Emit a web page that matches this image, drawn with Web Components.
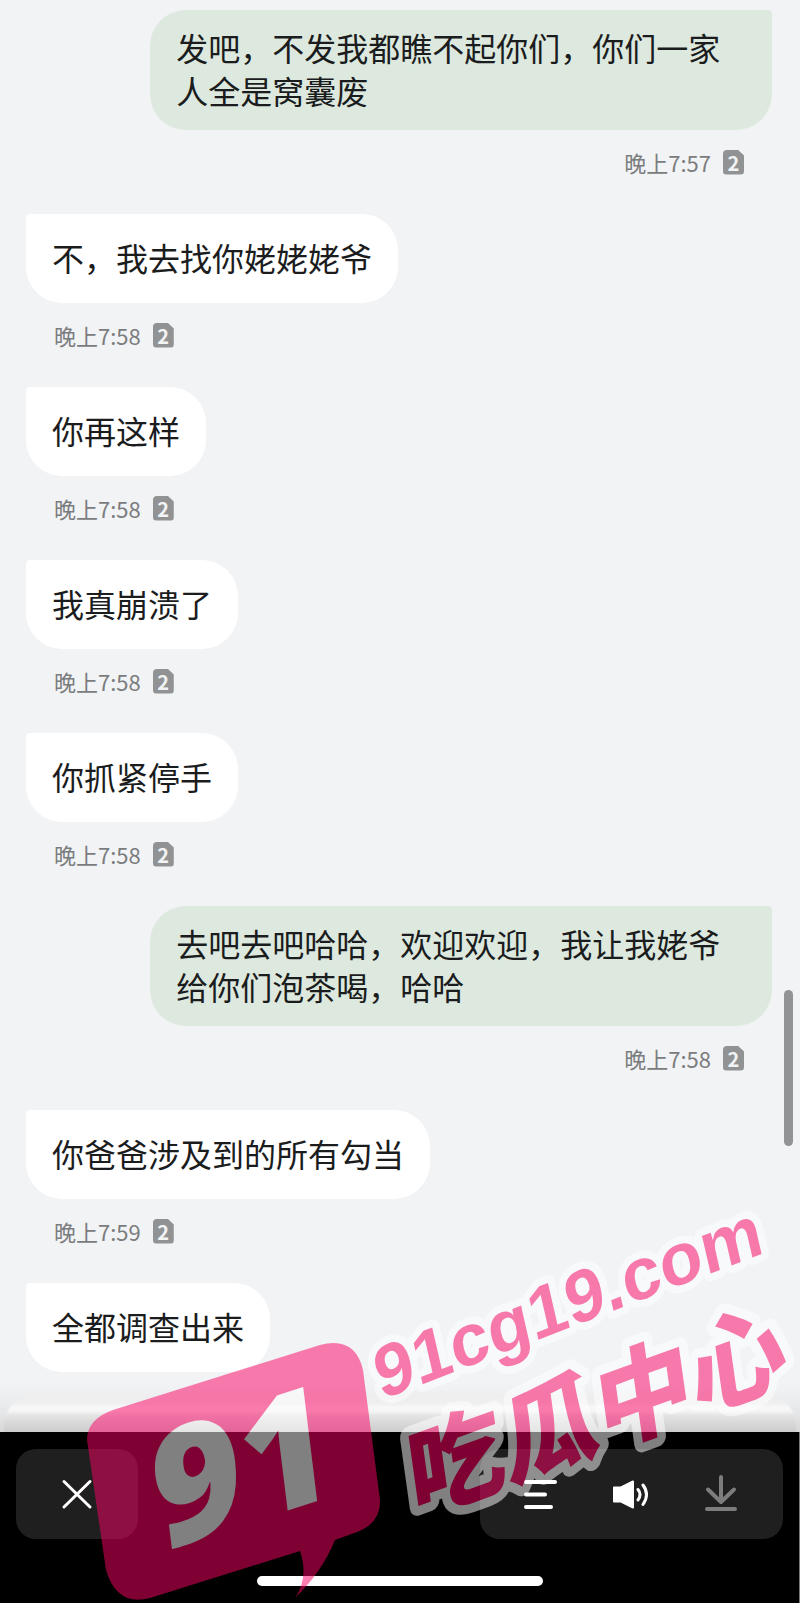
<!DOCTYPE html>
<html lang="zh-CN">
<head>
<meta charset="utf-8">
<meta name="viewport" content="width=device-width, initial-scale=1">
<title>信息</title>
<style>
  html, body { height: 100%; }
  body {
    margin: 0;
    background: #000;
    font-family: "Noto Sans CJK SC", "Noto Sans", sans-serif;
  }
</style>
</head>
<body>
<chat-viewer>
  <chat-message side="out" time="晚上7:57">发吧，不发我都瞧不起你们，你们一家人全是窝囊废</chat-message>
  <chat-message time="晚上7:58">不，我去找你姥姥姥爷</chat-message>
  <chat-message time="晚上7:58">你再这样</chat-message>
  <chat-message time="晚上7:58">我真崩溃了</chat-message>
  <chat-message time="晚上7:58">你抓紧停手</chat-message>
  <chat-message side="out" time="晚上7:58">去吧去吧哈哈，欢迎欢迎，我让我姥爷给你们泡茶喝，哈哈</chat-message>
  <chat-message time="晚上7:59">你爸爸涉及到的所有勾当</chat-message>
  <chat-message>全都调查出来</chat-message>
  <viewer-bar slot="bar"></viewer-bar>
  <site-watermark slot="overlay"></site-watermark>
</chat-viewer>

<script>
'use strict';

class SimBadge extends HTMLElement {
  constructor() {
    super();
    this.attachShadow({mode: 'open'});
    this.shadowRoot.innerHTML = `
      <style>
        :host {
          display: grid;
          place-items: center;
          width: 21px;
          height: 25px;
          background: #919293;
          border-radius: 4px;
          clip-path: polygon(0 0, 70% 0, 100% 24%, 100% 100%, 0 100%);
          color: #f1f3f5;
          font-size: 20px;
          font-weight: 700;
          line-height: 25px;
        }
      </style>
      <slot></slot>
    `;
  }
}
customElements.define('sim-badge', SimBadge);

class ChatMessage extends HTMLElement {
  static get observedAttributes() { return ['time']; }
  constructor() {
    super();
    this.attachShadow({mode: 'open'});
    this.shadowRoot.innerHTML = `
      <style>
        :host {
          display: flex;
          flex-direction: column;
          align-items: flex-start;
          flex: none;
        }
        :host([side="out"]) {
          align-items: flex-end;
        }
        p {
          margin: 0;
          padding: 22px 26px 24px;
          max-width: calc(100% * 5 / 6);
          box-sizing: border-box;
          border-radius: 4px 36px 36px 36px;
          background: #fff;
          color: #1b1c1d;
          font-size: 32px;
          line-height: 43px;
        }
        :host([side="out"]) p {
          padding: 16px 26px 18px;
          border-radius: 36px 4px 36px 36px;
          background: #dde9de;
        }
        footer {
          display: flex;
          align-items: center;
          gap: 12px;
          height: 64px;
          padding: 0 28px;
          margin-bottom: 20px;
          color: #7b7c7e;
          font-size: 22px;
          line-height: 32px;
        }
        footer[hidden] { display: none; }
      </style>
      <p><slot></slot></p>
      <footer hidden><time></time><sim-badge>2</sim-badge></footer>
    `;
  }
  attributeChangedCallback(name, oldValue, newValue) {
    if (oldValue === newValue) return;
    this.shadowRoot.querySelector('time').textContent = newValue;
    this.shadowRoot.querySelector('footer').hidden = !newValue;
  }
}
customElements.define('chat-message', ChatMessage);

class ChatViewer extends HTMLElement {
  constructor() {
    super();
    this.attachShadow({mode: 'open'});
    this.shadowRoot.innerHTML = `
      <style>
        :host {
          display: flex;
          flex-direction: column;
          position: relative;
          min-height: 100%;
        }
        main {
          position: relative;
          flex: 1;
          display: flex;
          flex-direction: column;
          padding: 10px 28px 60px 26px;
          background: #f1f3f5;
        }
        .fade {
          position: absolute;
          inset: auto 0 0 0;
          height: 48px;
          background: linear-gradient(#f1f3f500, #e6e7e8 60%, #d6d6d6);
        }
        .fade::after {
          content: "";
          position: absolute;
          inset: 10px 4px 0 4px;
          border-radius: 32px 32px 0 0;
          background: linear-gradient(#eeeeef, #efefef 24%, #f8f8f8 36%, #f4f4f4 46%, #e4e4e4 56%, #cccccc);
        }
        .thumb {
          position: absolute;
          right: 7px;
          top: 990px;
          width: 9px;
          height: 156px;
          border-radius: 5px;
          background: #929394;
        }
      </style>
      <main>
        <slot></slot>
        <div class="fade"></div>
        <div class="thumb"></div>
      </main>
      <slot name="bar"></slot>
      <slot name="overlay"></slot>
    `;
  }
}
customElements.define('chat-viewer', ChatViewer);

class ViewerBar extends HTMLElement {
  constructor() {
    super();
    this.attachShadow({mode: 'open'});
    this.shadowRoot.innerHTML = `
      <style>
        :host {
          display: block;
          flex: none;
          padding: 17px 16px;
          background: #000;
          border-right: 1px solid #777;
        }
        nav {
          display: flex;
          justify-content: space-between;
        }
        div {
          display: flex;
          align-items: center;
          justify-content: space-around;
          box-sizing: border-box;
          height: 90px;
          border-radius: 20px;
          background: #1f1f1f;
        }
        .close { width: 122px; }
        .tools { width: 303px; padding: 0 16px; }
        button {
          display: grid;
          place-items: center;
          width: 60px;
          height: 60px;
          padding: 0;
          border: 0;
          background: none;
          color: #fff;
          cursor: pointer;
        }
        button:disabled { color: #7d7d7d; cursor: default; }
        svg {
          width: 40px;
          height: 40px;
          fill: none;
          stroke: currentColor;
          stroke-width: 3;
          stroke-linecap: round;
          stroke-linejoin: round;
        }
        hr {
          width: 286px;
          height: 10px;
          margin: 37px auto 0;
          border: 0;
          border-radius: 5px;
          background: #fff;
        }
      </style>
      <nav>
        <div class="close">
          <button aria-label="关闭"><svg viewBox="0 0 40 40"><path d="M7 7.500L33 33M33 7.500L7 33"/></svg></button>
        </div>
        <div class="tools">
          <button aria-label="列表"><svg viewBox="0 0 40 40"><path stroke-width="4" d="M5 8H34M5 20.500H24M5 33H30"/></svg></button>
          <button aria-label="声音"><svg viewBox="0 0 40 40"><path fill="currentColor" stroke-width="2" d="M3 13.500H10L22 7.500V33.500L10 27.500H3Z"/><path d="M27 15.500Q31 20.500 27 26M32 11Q39 20.500 32 30.500"/></svg></button>
          <button aria-label="下载" disabled><svg viewBox="0 0 40 40"><path stroke-width="4" d="M19 3V27M6 15.500L19 28L32 15.500M5 35H33"/></svg></button>
        </div>
      </nav>
      <hr>
    `;
  }
}
customElements.define('viewer-bar', ViewerBar);

class SiteWatermark extends HTMLElement {
  constructor() {
    super();
    this.attachShadow({mode: 'open'});
    this.shadowRoot.innerHTML = `
      <style>
        :host {
          display: block;
          position: absolute;
          inset: auto 0 0 0;
          opacity: .5;
          pointer-events: none;
        }
        svg { display: block; width: 100%; overflow: visible; }
        path, text { fill: #fd0064; }
        text {
          stroke: #fff;
          stroke-linejoin: round;
          paint-order: stroke;
        }
        .mark {
          fill: #fff;
          stroke: none;
          font: 800 158px "Open Sans", sans-serif;
        }
        .url {
          stroke-width: 15px;
          font: 700 72px "Liberation Sans", sans-serif;
        }
        .name {
          stroke-width: 18px;
          font: 900 100px "Noto Sans CJK SC", sans-serif;
        }
      </style>
      <svg viewBox="0 1103 800 500">
        <path d="M87 1440Q87 1419 113 1410L320 1345Q355 1336 363 1370L380 1500Q381 1523 357 1532L335 1540Q322 1572 295 1598Q309 1578 300 1551L150 1598Q117 1607 106 1570Z"/>
        <text class="mark" transform="translate(160 1552) rotate(-18) skewX(-11)">91</text>
        <text class="name" transform="translate(414 1516) rotate(-20) skewX(-12)">吃瓜中心</text>
        <text class="url" transform="translate(381 1400) rotate(-21) skewX(-8)">91cg19.com</text>
      </svg>
    `;
  }
}
customElements.define('site-watermark', SiteWatermark);
</script>
</body>
</html>
